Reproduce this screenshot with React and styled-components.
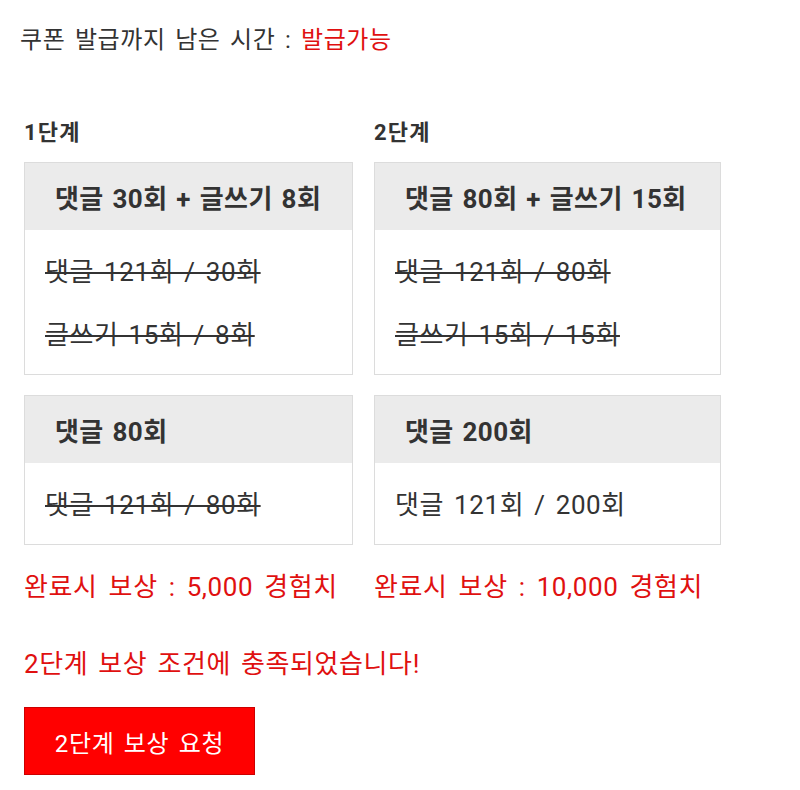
import styled, { createGlobalStyle } from 'styled-components';

const GlobalStyle = createGlobalStyle`
  body {
    margin: 0;
    background: #fff;
    font-family: Roboto, "Noto Sans CJK KR", sans-serif;
    color: #333;
    letter-spacing: 0.6px;
    word-spacing: 3px;
  }
`;

const stages = [
  {
    label: '1단계',
    width: 329,
    cards: [
      {
        title: '댓글 30회 + 글쓰기 8회',
        rows: [
          { text: '댓글 121회 / 30회', done: true },
          { text: '글쓰기 15회 / 8회', done: true },
        ],
      },
      {
        title: '댓글 80회',
        rows: [{ text: '댓글 121회 / 80회', done: true }],
      },
    ],
    reward: '완료시 보상 : 5,000 경험치',
  },
  {
    label: '2단계',
    width: 347,
    cards: [
      {
        title: '댓글 80회 + 글쓰기 15회',
        rows: [
          { text: '댓글 121회 / 80회', done: true },
          { text: '글쓰기 15회 / 15회', done: true },
        ],
      },
      {
        title: '댓글 200회',
        rows: [{ text: '댓글 121회 / 200회', done: false }],
      },
    ],
    reward: '완료시 보상 : 10,000 경험치',
  },
];

export default function App() {
  return (
    <StyledPage>
      <GlobalStyle />
      <Notice>
        쿠폰 발급까지 남은 시간 : <span className="red">발급가능</span>
      </Notice>

      <Stages>
        {stages.map((stage) => (
          <StageColumn key={stage.label} $width={stage.width}>
            <StageLabel>{stage.label}</StageLabel>
            {stage.cards.map((card) => (
              <Card key={card.title}>
                <CardHeader>{card.title}</CardHeader>
                <CardBody>
                  {card.rows.map((row) => (
                    <Row key={row.text} $done={row.done}>
                      {row.text}
                    </Row>
                  ))}
                </CardBody>
              </Card>
            ))}
            <Reward>{stage.reward}</Reward>
          </StageColumn>
        ))}
      </Stages>

      <Message>2단계 보상 조건에 충족되었습니다!</Message>
      <RequestButton type="button">2단계 보상 요청</RequestButton>
    </StyledPage>
  );
}

const StyledPage = styled.main`
  padding: 20px 0 0 24px;
`;

const Notice = styled.p`
  margin: 0 0 0 -4px;
  font-size: 24px;
  line-height: 40px;
  color: #333;

  .red {
    color: #e01010;
  }
`;

const Stages = styled.div`
  display: flex;
  gap: 21px;
  margin-top: 58px;
`;

const StageColumn = styled.section`
  width: ${(p) => p.$width}px;
  display: flex;
  flex-direction: column;
`;

const StageLabel = styled.h3`
  margin: 0 0 14px;
  font-size: 22px;
  font-weight: 700;
  line-height: 30px;
  letter-spacing: 1.2px;
  color: #333;
`;

const Card = styled.div`
  border: 1px solid #dcdcdc;
  background: #fff;

  & + & {
    margin-top: 20px;
  }
`;

const CardHeader = styled.div`
  height: 67px;
  display: flex;
  align-items: center;
  padding: 0 0 0 30px;
  background: #ebebeb;
  font-size: 26px;
  font-weight: 700;
  letter-spacing: 0.4px;
  word-spacing: 2px;
  white-space: nowrap;
  color: #333;
`;

const CardBody = styled.div`
  padding: 22px 20px 19px;
  display: flex;
  flex-direction: column;
  gap: 23px;
`;

const Row = styled.p`
  margin: 0;
  font-size: 26px;
  line-height: 40px;
  color: #333;
  white-space: nowrap;
  text-decoration: ${(p) => (p.$done ? 'line-through' : 'none')};
  text-decoration-thickness: 2px;
`;

const Reward = styled.p`
  margin: 22px 0 0;
  font-size: 26px;
  line-height: 40px;
  word-spacing: 4px;
  color: #e01010;
  white-space: nowrap;
`;

const Message = styled.p`
  margin: 37px 0 0;
  font-size: 26px;
  line-height: 40px;
  color: #e01010;
`;

const RequestButton = styled.button`
  margin-top: 23px;
  width: 231px;
  height: 68px;
  border: 1px solid #c00;
  background: #ff0000;
  color: #fff;
  font-family: inherit;
  font-size: 24px;
  letter-spacing: 0.6px;
  word-spacing: 3px;
  cursor: pointer;
`;
